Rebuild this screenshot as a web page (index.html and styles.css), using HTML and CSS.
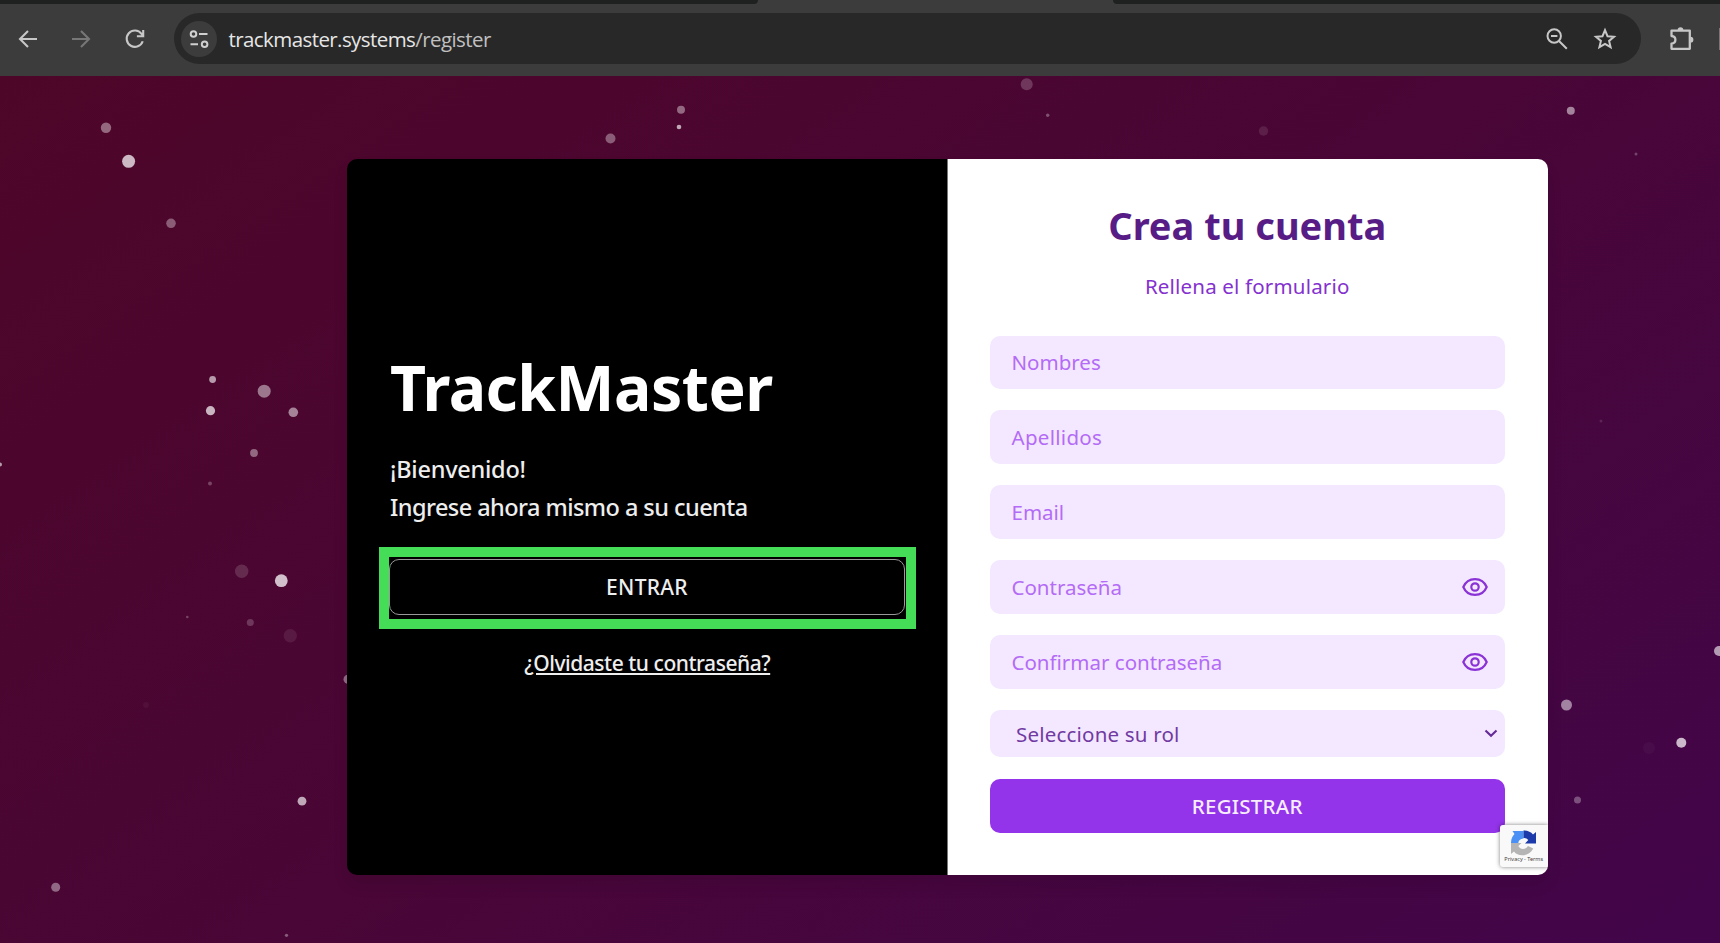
FILE: index.html
```html
<!DOCTYPE html>
<html lang="es">
<head>
<meta charset="utf-8">
<title>TrackMaster</title>
<link rel="stylesheet" href="styles.css">
</head>
<body>
<header class="browser">
  <div class="tabs"><div class="tab-left"></div><div class="tab-active"></div><div class="tab-right"></div></div>
  <div class="toolbar">
    <div class="nav">
      <svg width="20" height="20" viewBox="0 0 20 20" fill="none" stroke="#c7c7c7" stroke-width="2.1"><path d="M19 10H2M10 2L2 10l8 8"/></svg>
      <svg width="20" height="20" viewBox="0 0 20 20" fill="none" stroke="#777" stroke-width="2.1"><path d="M1 10h17M10 2l8 8-8 8"/></svg>
      <svg width="20" height="20" viewBox="0 0 20 20" fill="none" stroke="#c7c7c7" stroke-width="2.1"><path d="M17.7 12.2A8.2 8.2 0 1 1 16.5 4.8L18 6.6M18.2 1v6.3h-6.3"/></svg>
    </div>
    <div class="address">
      <span class="site"><svg width="20" height="20" viewBox="0 0 20 20" fill="none" stroke="#d0d0d0" stroke-width="2"><circle cx="4.5" cy="5" r="2.8"/><path d="M10 5h8.5M1.5 15.3H9"/><circle cx="15.6" cy="15.3" r="2.8"/></svg></span>
      <span class="url">trackmaster.systems<span class="path">/register</span></span>
      <svg class="magnifier" width="24" height="24" viewBox="0 0 24 24" fill="none" stroke="#c7c7c7" stroke-width="2"><circle cx="9.2" cy="9" r="6.7"/><path d="M14 14l7.800 7.800M6 9h6.400"/></svg>
      <svg width="24" height="24" viewBox="0 0 24 24" fill="none" stroke="#c7c7c7" stroke-width="2"><path d="M12 3.200l2.500 6 6.500.5-4.900 4.200 1.500 6.300L12 16.900l-5.600 3.300 1.500-6.300L3 9.700l6.500-.5z"/></svg>
    </div>
    <svg class="puzzle" width="26" height="26" viewBox="0 0 26 26"><path d="M2.500 4.700h18.300v18.100H2.500v-5.200c5.200-.4 5.200-7.200 0-7.600z" fill="none" stroke="#c7c7c7" stroke-width="2.300" stroke-linejoin="round"/><path d="M8.700 4a2.800 2.800 0 0 1 5.600 0zM21.500 10.800a2.900 2.900 0 0 1 0 5.800z" fill="#c7c7c7"/></svg>
    <span class="edge"></span>
  </div>
</header>
<main class="page">
  <svg class="stars" width="1720" height="943" viewBox="0 0 1720 943" fill="#fff">
    <circle cx="106" cy="127.7" r="5.2" opacity=".4"/><circle cx="128.6" cy="161.3" r="6.5" opacity=".72"/><circle cx="171" cy="223.3" r="4.8" opacity=".35"/><circle cx="212.6" cy="379.5" r="3.4" opacity=".6"/><circle cx="264.2" cy="391.2" r="6.5" opacity=".45"/><circle cx="210.5" cy="410.7" r="4.6" opacity=".7"/><circle cx="293.3" cy="412.3" r="4.8" opacity=".5"/><circle cx="254" cy="453" r="3.9" opacity=".4"/><circle cx="210" cy="483.5" r="2" opacity=".25"/><circle cx="0" cy="464.5" r="2" opacity=".6"/>
    <circle cx="241.7" cy="571.3" r="6.7" opacity=".15"/><circle cx="281.3" cy="580.7" r="6.4" opacity=".75"/><circle cx="187.3" cy="617" r="1.3" opacity=".25"/><circle cx="250.3" cy="622.5" r="3.5" opacity=".2"/><circle cx="290.3" cy="635.8" r="6.7" opacity=".08"/><circle cx="348" cy="679.3" r="4.5" opacity=".4"/><circle cx="146" cy="705" r="3" opacity=".04"/><circle cx="302" cy="801.2" r="4.4" opacity=".65"/><circle cx="55.7" cy="887.2" r="4.5" opacity=".4"/><circle cx="286.5" cy="935.3" r="1.6" opacity=".35"/>
    <circle cx="1026.7" cy="84.3" r="6" opacity=".2"/><circle cx="1047.7" cy="115.3" r="1.7" opacity=".3"/><circle cx="681" cy="109.7" r="4" opacity=".4"/><circle cx="679" cy="127" r="2.3" opacity=".65"/><circle cx="610.5" cy="138.5" r="5" opacity=".35"/><circle cx="1263.5" cy="131" r="4.7" opacity=".1"/>
    <circle cx="1570.8" cy="110.7" r="4" opacity=".5"/><circle cx="1636" cy="154" r="1.5" opacity=".25"/><circle cx="1601" cy="421" r="1.5" opacity=".12"/><circle cx="1719" cy="651" r="5" opacity=".6"/><circle cx="1566.5" cy="705" r="5.5" opacity=".5"/><circle cx="1681.3" cy="742.7" r="5" opacity=".72"/><circle cx="1649" cy="748" r="6" opacity=".03"/><circle cx="1577.5" cy="800" r="3.5" opacity=".3"/>
  </svg>
  <section class="card">
    <div class="welcome">
      <h1 class="brand">TrackMaster</h1>
      <p class="intro"><span class="hello">¡Bienvenido!</span><br><span class="invite">Ingrese ahora mismo a su cuenta</span></p>
      <div class="highlight"><a class="enter">ENTRAR</a></div>
      <a class="forgot">¿Olvidaste tu contraseña?</a>
    </div>
    <div class="register">
      <h2 class="heading">Crea tu cuenta</h2>
      <p class="sub">Rellena el formulario</p>
      <div class="form">
        <div class="field">Nombres</div>
        <div class="field surname">Apellidos</div>
        <div class="field">Email</div>
        <div class="field">Contraseña<svg width="26" height="20" viewBox="0 0 26 20" fill="none" stroke="#8b32d6" stroke-width="2.200"><path d="M1.300 10C5.800-.6 20.200-.6 24.700 10 20.200 20.600 5.800 20.600 1.300 10z"/><circle cx="13" cy="10" r="3.700"/></svg></div>
        <div class="field">Confirmar contraseña<svg width="26" height="20" viewBox="0 0 26 20" fill="none" stroke="#8b32d6" stroke-width="2.200"><path d="M1.300 10C5.800-.6 20.200-.6 24.700 10 20.200 20.600 5.800 20.600 1.300 10z"/><circle cx="13" cy="10" r="3.700"/></svg></div>
        <div class="field select">Seleccione su rol<svg width="14" height="9" viewBox="0 0 14 9" fill="none" stroke="#652a96" stroke-width="2.100"><path d="M1.500 1.500L7 6.800l5.500-5.300"/></svg></div>
        <div class="submit">REGISTRAR</div>
      </div>
    </div>
    <aside class="captcha">
      <svg width="27" height="27" viewBox="0 0 27 27"><path d="M1 14A12.500 12.500 0 0 1 4.500 5L2.500 2H13.500v7.500C10 10 8.500 11.500 8.300 14z" fill="#4a90f5"/><path d="M13.500 1.500C18 1.500 21 3 23 5.500L26 3v11.500H15l3.300-3.500a5.200 5.200 0 0 0-4.800-2z" fill="#1c3aa9"/><path d="M1 14h10.500L8.300 17c2 4 7.200 4 9.700 0l5.300 2.500C18.500 28 8 28 4 22.500L1 25z" fill="#b5b5b5"/></svg>
      <span class="legal">Privacy - Terms</span>
    </aside>
  </section>
</main>
</body>
</html>
```
FILE: styles.css
```css
* { box-sizing: border-box; }
body { margin: 0; width: 1720px; height: 943px; overflow: hidden; font-family: "Noto Sans", sans-serif; }
h1, h2, p { margin: 0; }
svg { display: block; flex: none; }

.browser { height: 75.5px; background: #3c3c3c; position: relative; z-index: 1; }
.tabs { display: flex; height: 4.3px; }
.tab-left { width: 758px; background: #1f2120; border-radius: 0 0 7px 0; }
.tab-active { width: 355px; }
.tab-right { flex: 1; background: #1f2120; border-radius: 0 0 0 7px; }
.toolbar { display: flex; align-items: center; height: 69px; }
.nav { display: flex; gap: 33.5px; padding-left: 17.5px; width: 173.5px; }
.address { display: flex; align-items: center; width: 1467.5px; height: 51px; border-radius: 26px; background: #282828; padding: 0 24px 0 7px; }
.site { width: 36px; height: 36px; border-radius: 50%; background: #3c3c3c; display: flex; align-items: center; justify-content: center; }
.url { font-family: "Open Sans", sans-serif; font-size: 20.5px; color: #e6e6e6; margin-left: 12px; flex: 1; letter-spacing: -.58px; line-height: 28px; }
.path { color: #c0c0c0; }
.magnifier { margin-right: 24px; }
.puzzle { margin-left: 28px; }
.edge { margin-left: auto; width: 1.5px; height: 22px; background: #777; }

.page { height: 867.5px; padding: 83px 0 0 347px; background: linear-gradient(145deg, #4e0628 0%, #490636 50%, #42054a 100%); }
.stars { position: absolute; left: 0; top: 0; }
.card { position: relative; display: flex; width: 1200.5px; height: 716.5px; border-radius: 10px; overflow: hidden; box-shadow: 0 10px 16px rgba(0, 0, 0, .08); }
.welcome { width: 600.5px; background: #000; border-right: 1px solid #777; color: #fff; padding: 184px 31px 0 32px; display: flex; flex-direction: column; }
.brand { font-size: 62.5px; line-height: 88px; font-weight: 700; padding-left: 11px; white-space: nowrap; letter-spacing: -.5px; }
.intro { font-size: 23.5px; line-height: 38px; color: #eee; padding: 19.5px 0 0 11px; font-weight: 500; }
.hello { letter-spacing: -.25px; }
.invite { letter-spacing: -.55px; }
.highlight { width: 537px; height: 82px; border: 10px solid #45dc58; padding: 2px 1px 4px 0; margin-top: 20.5px; }
.enter { display: flex; align-items: center; justify-content: center; height: 56px; border: 1.5px solid #999; border-radius: 10px; font-size: 21px; font-weight: 500; color: #eee; letter-spacing: .3px; }
.forgot { align-self: center; font-size: 21px; font-weight: 500; line-height: 28px; color: #eee; text-decoration: underline; margin-top: 20px; white-space: nowrap; letter-spacing: -.46px; }
.register { width: 600px; background: #fff; padding: 40px 43px 0 42.5px; }
.heading { font-size: 38px; line-height: 52px; color: #581c87; text-align: center; font-weight: 700; }
.sub { font-size: 20.5px; line-height: 30px; color: #8431cf; text-align: center; margin-top: 20px; letter-spacing: .18px; }
.form { display: flex; flex-direction: column; gap: 21.6px; margin-top: 35px; }
.field { height: 53.4px; border-radius: 10px; background: #f3e8ff; display: flex; align-items: center; justify-content: space-between; padding: 0 17px 0 21.5px; font-size: 20.5px; line-height: 28px; color: #b46bf6; }
.surname { letter-spacing: .3px; }
.select { height: 47px; color: #713aa2; padding: 0 6.5px 0 26px; letter-spacing: .2px; }
.submit { height: 54px; border-radius: 10px; background: #9333ea; color: #f7edff; display: flex; align-items: center; justify-content: center; font-size: 20.5px; font-weight: 500; letter-spacing: .25px; }
.captcha { position: absolute; right: 0; bottom: 8.5px; width: 47.5px; height: 41.5px; background: #f9f9f9; border-radius: 3px 0 0 3px; box-shadow: 0 0 4px rgba(0, 0, 0, .5); display: flex; flex-direction: column; align-items: center; padding-top: 4px; }
.legal { font-size: 5.5px; line-height: 8px; color: #444; white-space: nowrap; margin-top: -1px; }
```
